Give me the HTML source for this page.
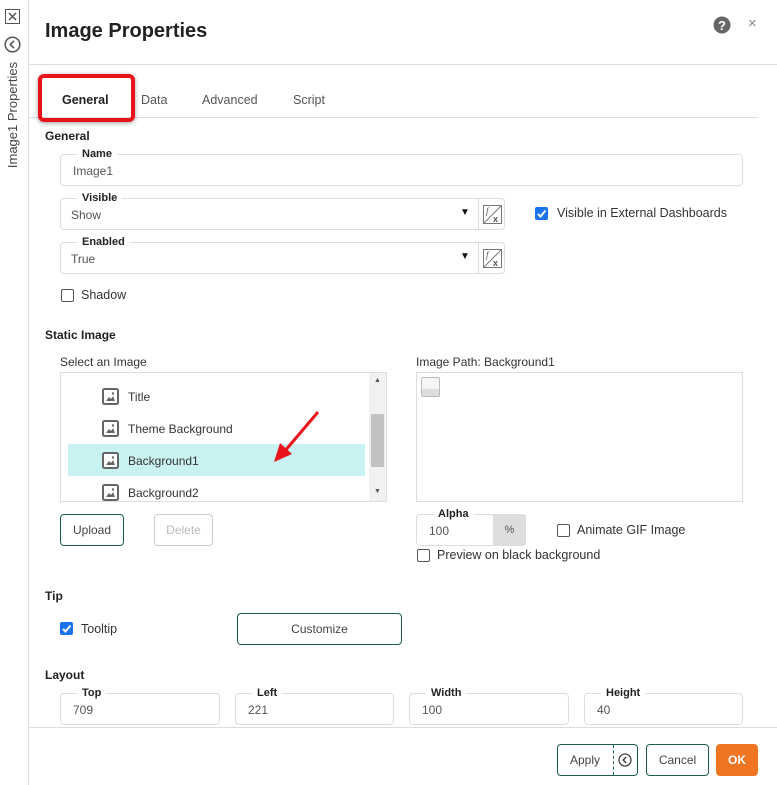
<!DOCTYPE html>
<html><head><meta charset="utf-8"><style>
*{box-sizing:border-box;margin:0;padding:0}
body{width:777px;height:785px;background:#fff;font-family:"Liberation Sans",sans-serif;font-size:12px;color:#333;position:relative;overflow:hidden}
.a{position:absolute}
.fld{position:absolute;border:1px solid #ddd;border-radius:4px;background:#fff}
.lbl{position:absolute;top:-7px;background:#fff;padding:0 5px;font-size:11px;font-weight:bold;color:#222;line-height:12px}
.val{position:absolute;left:12px;top:9px;color:#555;font-size:12px}
.h{position:absolute;left:45px;font-weight:bold;font-size:12px;color:#222}
.cb{position:absolute;width:13px;height:13px;border:1px solid #555;border-radius:2px;background:#fff}
.cbk{background:#1a73e8;border-color:#1a73e8}
.btn{position:absolute;border:1px solid #1e5b52;border-radius:4px;background:#fff;text-align:center;color:#444}
.item{position:absolute;font-size:12px;color:#333}
.ic{position:absolute;left:41px}
</style></head><body>
<div class="a" style="left:28px;top:0;width:1px;height:785px;background:#ddd"></div>
<svg class="a" style="left:5px;top:9px" width="16" height="16"><rect x="0.5" y="0.5" width="14" height="14" fill="none" stroke="#555"/><path d="M4 4L11 11M11 4L4 11" stroke="#555" stroke-width="1.5"/></svg>
<svg class="a" style="left:4px;top:36px" width="17" height="17"><circle cx="8.5" cy="8.5" r="7.3" fill="none" stroke="#555" stroke-width="1.5"/><path d="M10 4.8L6.3 8.5L10 12.2" fill="none" stroke="#555" stroke-width="1.6"/></svg>
<div class="a" style="left:-47px;top:108px;width:120px;transform:rotate(-90deg);text-align:center;font-size:13px;color:#444;line-height:14px;white-space:nowrap">Image1 Properties</div>
<div class="a" style="left:45px;top:20px;font-size:20px;font-weight:bold;color:#222">Image Properties</div>
<svg class="a" style="left:713px;top:16px" width="18" height="18"><circle cx="9" cy="9" r="8.5" fill="#666"/><text x="9" y="14" text-anchor="middle" font-family="Liberation Sans" font-weight="bold" font-size="13" fill="#fff">?</text></svg>
<div class="a" style="left:748px;top:15px;font-size:15px;color:#888">×</div>
<div class="a" style="left:28px;top:64px;width:749px;height:1px;background:#ddd"></div>
<div class="a" style="left:28px;top:117px;width:730px;height:1px;background:#ddd"></div>
<div class="a" style="left:38px;top:74px;width:97px;height:48px;border:4px solid #e8131b;border-radius:6px;box-shadow:0 1px 4px rgba(0,0,0,.4)"></div>
<div class="a" style="left:62px;top:93px;font-weight:bold;color:#222;font-size:12.5px">General</div>
<div class="a" style="left:141px;top:93px;color:#555;font-size:12.5px">Data</div>
<div class="a" style="left:202px;top:93px;color:#555;font-size:12.5px">Advanced</div>
<div class="a" style="left:293px;top:93px;color:#555;font-size:12.5px">Script</div>
<div class="h" style="top:129px">General</div>
<div class="fld" style="left:60px;top:154px;width:683px;height:32px"><div class="lbl" style="left:16px">Name</div><div class="val">Image1</div></div>
<div class="fld" style="left:60px;top:198px;width:445px;height:32px"><div class="lbl" style="left:16px">Visible</div><div class="val" style="left:10px">Show</div><div class="a" style="left:399px;top:8px;font-size:10px;color:#111">▼</div><div class="a" style="left:417px;top:0;width:1px;height:30px;background:#ddd"></div>
<svg class="a" style="left:422px;top:6px" width="19" height="19"><rect x="0.5" y="0.5" width="18" height="18" fill="none" stroke="#777"/><path d="M1 18L18 1" stroke="#777"/><text x="3" y="9" font-size="9" font-style="italic" fill="#555" font-family="Liberation Serif">f</text><text x="10" y="17" font-size="9" font-weight="bold" fill="#555" font-family="Liberation Sans">x</text></svg></div>
<div class="cb cbk" style="left:535px;top:207px"><svg width="11" height="11" style="position:absolute;left:0;top:0"><path d="M2 6L4.5 8.5L9.5 2.5" fill="none" stroke="#fff" stroke-width="2"/></svg></div>
<div class="a" style="left:557px;top:206px;font-size:12.5px">Visible in External Dashboards</div>
<div class="fld" style="left:60px;top:242px;width:445px;height:32px"><div class="lbl" style="left:16px">Enabled</div><div class="val" style="left:10px">True</div><div class="a" style="left:399px;top:8px;font-size:10px;color:#111">▼</div><div class="a" style="left:417px;top:0;width:1px;height:30px;background:#ddd"></div>
<svg class="a" style="left:422px;top:6px" width="19" height="19"><rect x="0.5" y="0.5" width="18" height="18" fill="none" stroke="#777"/><path d="M1 18L18 1" stroke="#777"/><text x="3" y="9" font-size="9" font-style="italic" fill="#555" font-family="Liberation Serif">f</text><text x="10" y="17" font-size="9" font-weight="bold" fill="#555" font-family="Liberation Sans">x</text></svg></div>
<div class="cb" style="left:61px;top:289px"></div>
<div class="a" style="left:81px;top:288px;font-size:12.5px">Shadow</div>
<div class="h" style="top:328px">Static Image</div>
<div class="a" style="left:60px;top:355px">Select an Image</div>
<div class="a" style="left:60px;top:372px;width:327px;height:130px;border:1px solid #ddd;overflow:hidden">
 <div class="a" style="left:7px;top:71px;width:297px;height:32px;background:#c9f2f2"></div>
 <svg class="ic" style="top:15px" width="17" height="17"><rect x="1" y="1" width="15" height="15" rx="1.5" fill="#fff" stroke="#666" stroke-width="2"/><path d="M4 13L7 9L9 11L11 8L13 13Z" fill="#666"/><circle cx="11" cy="5.5" r="1.2" fill="#666"/></svg><div class="item" style="left:67px;top:17px">Title</div>
 <svg class="ic" style="top:47px" width="17" height="17"><rect x="1" y="1" width="15" height="15" rx="1.5" fill="#fff" stroke="#666" stroke-width="2"/><path d="M4 13L7 9L9 11L11 8L13 13Z" fill="#666"/><circle cx="11" cy="5.5" r="1.2" fill="#666"/></svg><div class="item" style="left:67px;top:49px">Theme Background</div>
 <svg class="ic" style="top:79px" width="17" height="17"><rect x="1" y="1" width="15" height="15" rx="1.5" fill="#fff" stroke="#666" stroke-width="2"/><path d="M4 13L7 9L9 11L11 8L13 13Z" fill="#666"/><circle cx="11" cy="5.5" r="1.2" fill="#666"/></svg><div class="item" style="left:67px;top:81px">Background1</div>
 <svg class="ic" style="top:111px" width="17" height="17"><rect x="1" y="1" width="15" height="15" rx="1.5" fill="#fff" stroke="#666" stroke-width="2"/><path d="M4 13L7 9L9 11L11 8L13 13Z" fill="#666"/><circle cx="11" cy="5.5" r="1.2" fill="#666"/></svg><div class="item" style="left:67px;top:113px">Background2</div>
 <div class="a" style="left:308px;top:0;width:18px;height:128px;background:#f1f1f1"></div>
 <div class="a" style="left:310px;top:41px;width:13px;height:53px;background:#c1c1c1"></div>
 <div class="a" style="left:313px;top:4px;font-size:7px;color:#555">▲</div>
 <div class="a" style="left:313px;top:115px;font-size:7px;color:#555">▼</div>
</div>
<svg class="a" style="left:272px;top:410px" width="50" height="55"><path d="M46 2L12 42" stroke="#e8131b" stroke-width="3"/><path d="M2 52L8 33L20 44Z" fill="#e8131b"/></svg>
<div class="a" style="left:416px;top:355px">Image Path: Background1</div>
<div class="a" style="left:416px;top:372px;width:327px;height:130px;border:1px solid #ddd"><div class="a" style="left:4px;top:4px;width:19px;height:20px;border:1px solid #bbb;border-radius:2px;background:linear-gradient(#f5f5f5 60%,#ddd 60%)"></div></div>
<div class="btn" style="left:60px;top:514px;width:64px;height:32px;line-height:30px">Upload</div>
<div class="btn" style="left:154px;top:514px;width:59px;height:32px;line-height:30px;border-color:#ccc;color:#bbb">Delete</div>
<div class="fld" style="left:416px;top:514px;width:110px;height:32px;overflow:visible"><div class="lbl" style="left:16px">Alpha</div><div class="val">100</div><div class="a" style="left:76px;top:0;width:33px;height:30px;background:#ddd;text-align:center;line-height:30px;font-size:11px;color:#555">%</div></div>
<div class="cb" style="left:557px;top:524px"></div>
<div class="a" style="left:577px;top:523px;font-size:12.5px">Animate GIF Image</div>
<div class="cb" style="left:417px;top:549px"></div>
<div class="a" style="left:437px;top:548px;font-size:12.5px">Preview on black background</div>
<div class="h" style="top:589px">Tip</div>
<div class="cb cbk" style="left:60px;top:622px"><svg width="11" height="11" style="position:absolute;left:0;top:0"><path d="M2 6L4.5 8.5L9.5 2.5" fill="none" stroke="#fff" stroke-width="2"/></svg></div>
<div class="a" style="left:81px;top:622px;font-size:12.5px">Tooltip</div>
<div class="btn" style="left:237px;top:613px;width:165px;height:32px;line-height:30px">Customize</div>
<div class="h" style="top:668px">Layout</div>
<div class="fld" style="left:60px;top:693px;width:160px;height:32px"><div class="lbl" style="left:16px">Top</div><div class="val">709</div></div>
<div class="fld" style="left:235px;top:693px;width:159px;height:32px"><div class="lbl" style="left:16px">Left</div><div class="val">221</div></div>
<div class="fld" style="left:409px;top:693px;width:160px;height:32px"><div class="lbl" style="left:16px">Width</div><div class="val">100</div></div>
<div class="fld" style="left:584px;top:693px;width:159px;height:32px"><div class="lbl" style="left:16px">Height</div><div class="val">40</div></div>
<div class="a" style="left:28px;top:727px;width:749px;height:1px;background:#ddd"></div>
<div class="btn" style="left:557px;top:744px;width:81px;height:32px;line-height:30px"><span class="a" style="left:12px;top:0">Apply</span><div class="a" style="left:55px;top:0;height:30px;border-left:1px dashed #1e5b52"></div>
<svg class="a" style="left:60px;top:8px" width="14" height="14"><circle cx="7" cy="7" r="6" fill="none" stroke="#444" stroke-width="1.3"/><path d="M8.2 4L5.2 7L8.2 10" fill="none" stroke="#444" stroke-width="1.5"/></svg></div>
<div class="btn" style="left:646px;top:744px;width:63px;height:32px;line-height:30px">Cancel</div>
<div class="a" style="left:716px;top:744px;width:42px;height:32px;line-height:32px;background:#f07522;border-radius:4px;color:#fff;text-align:center;font-weight:bold">OK</div>
</body></html>
